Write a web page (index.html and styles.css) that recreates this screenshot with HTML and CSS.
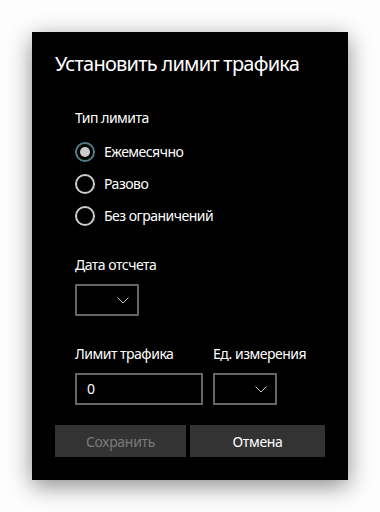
FILE: index.html
```html
<html>
<head>
	<title>Установить лимит трафика</title>
	<meta charset="utf-8">
	<link rel="stylesheet" href="styles.css">
</head>
<body>
	<div class="dialog">
		<h1 class="title">Установить лимит трафика</h1>
		<div class="content">
			<div class="label">Тип лимита</div>
			<div class="radios">
				<div class="radio checked"><span class="circle"></span>Ежемесячно</div>
				<div class="radio"><span class="circle"></span>Разово</div>
				<div class="radio"><span class="circle"></span>Без ограничений</div>
			</div>
			<div class="label">Дата отсчета</div>
			<div class="select">
				<svg width="12" height="7" viewBox="0 0 12 7"><path d="M0.5 0.5 L6 6 L11.5 0.5" fill="none" stroke="#c8c8c8" stroke-width="1"/></svg>
			</div>
			<div class="row">
				<div class="field">
					<div class="label">Лимит трафика</div>
					<div class="input">0</div>
				</div>
				<div class="field">
					<div class="label">Ед. измерения</div>
					<div class="select">
						<svg width="12" height="7" viewBox="0 0 12 7"><path d="M0.5 0.5 L6 6 L11.5 0.5" fill="none" stroke="#c8c8c8" stroke-width="1"/></svg>
					</div>
				</div>
			</div>
		</div>
		<div class="buttons">
			<button class="btn disabled">Сохранить</button>
			<button class="btn">Отмена</button>
		</div>
	</div>
</body>
</html>
```

FILE: styles.css
```css
body {
	margin: 0;
	background-color: #fdfdfd;
	font-family: "Noto Sans", "Open Sans", sans-serif;
	color: #ffffff;
}

.dialog {
	margin: 32px 0 0 32px;
	width: 316px;
	height: 448px;
	box-sizing: border-box;
	padding: 18px 23px 23px 23px;
	background-color: #000000;
	box-shadow: 0 6px 22px rgba(0, 0, 0, 0.45);
}

.title {
	margin: 0;
	font-size: 20px;
	line-height: 28px;
	font-weight: normal;
	letter-spacing: -0.75px;
}

.content {
	padding: 30px 0 0 20px;
}

.label {
	font-size: 14px;
	line-height: 20px;
	letter-spacing: -0.5px;
}

.radios {
	margin: 8px 0 23px 0;
}

.radio {
	display: flex;
	align-items: center;
	height: 32px;
	font-size: 14px;
	line-height: 20px;
	letter-spacing: -0.5px;
}

.circle {
	width: 20px;
	height: 20px;
	box-sizing: border-box;
	border: 2px solid #cccccc;
	border-radius: 50%;
	margin-right: 9px;
	display: flex;
	align-items: center;
	justify-content: center;
}

.radio.checked .circle {
	border-color: #4d7f88;
}

.radio.checked .circle::after {
	content: "";
	width: 10px;
	height: 10px;
	border-radius: 50%;
	background-color: #cccccc;
}

.select {
	margin-top: 9px;
	width: 64px;
	height: 32px;
	box-sizing: border-box;
	border: 2px solid #666666;
	display: flex;
	align-items: center;
	justify-content: flex-end;
	padding-right: 8px;
}

.row {
	display: flex;
	gap: 10px;
	margin-top: 28px;
}

.input {
	margin-top: 9px;
	width: 128px;
	height: 32px;
	box-sizing: border-box;
	border: 2px solid #666666;
	padding-left: 10px;
	font-size: 14px;
	line-height: 28px;
}

.buttons {
	display: grid;
	grid-template-columns: 131px 135px;
	gap: 4px;
	margin-top: 20px;
}

.btn {
	height: 32px;
	border: none;
	background-color: #333333;
	color: #ffffff;
	font-family: "Noto Sans", "Open Sans", sans-serif;
	font-size: 14px;
	letter-spacing: -0.3px;
	padding: 0;
}

.btn.disabled {
	color: #7a7a7a;
}
```
